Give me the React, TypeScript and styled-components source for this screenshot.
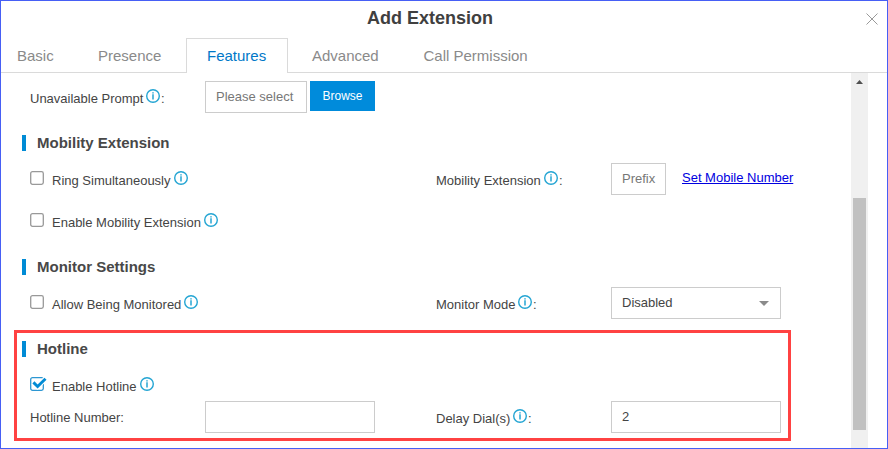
import React from "react";
import styled, { createGlobalStyle } from "styled-components";

const GlobalStyle = createGlobalStyle`
  * { box-sizing: border-box; }
  body {
    margin: 0;
    background: #fff;
    font-family: "Liberation Sans", Arial, sans-serif;
    font-size: 13px;
    color: #444;
  }
`;

const Dialog = styled.div`
  width: 888px;
  height: 449px;
  border: 1px solid #465ff5;
  background: #fff;
  display: flex;
  flex-direction: column;
  overflow: hidden;
`;

const Header = styled.header`
  height: 37px;
  flex: none;
  display: grid;
  grid-template-columns: 858px 28px;
`;

const Title = styled.h1`
  margin: 0;
  text-align: center;
  font-size: 18px;
  line-height: 34px;
  font-weight: bold;
  color: #404040;
`;

const CloseButton = styled.button`
  border: 0;
  padding: 12px 0 0 7px;
  background: none;
  display: flex;
`;

const TabBar = styled.nav`
  height: 35px;
  flex: none;
  display: flex;
`;

const Tab = styled.div<{ $width: number; $indent?: number; $active?: boolean }>`
  width: ${(p) => p.$width}px;
  padding-left: ${(p) => p.$indent ?? 21}px;
  border: 1px solid transparent;
  border-color: ${(p) => (p.$active ? "#dadada #dadada transparent" : "transparent transparent #dadada")};
  border-width: ${(p) => (p.$active ? "1px 1px 0" : "1px 0")};
  font-size: 15px;
  line-height: 34px;
  white-space: nowrap;
  color: ${(p) => (p.$active ? "#0078c8" : "#8a8a8a")};
`;

const TabRest = styled.div`
  flex: 1;
  border-bottom: 1px solid #dadada;
`;

const Body = styled.div`
  flex: 1;
  display: flex;
  min-height: 0;
`;

const Form = styled.form`
  width: 850px;
  padding-top: 8px;
`;

const Row = styled.div<{ $height?: number }>`
  height: ${(p) => p.$height ?? 32}px;
  margin-left: 29px;
  display: grid;
  grid-template-columns: 175px 231px 175px 1fr;
`;

const Label = styled.label<{ $drop?: number }>`
  display: flex;
  align-items: flex-start;
  padding-top: ${(p) => p.$drop ?? 10}px;
  line-height: 15px;
  white-space: nowrap;
`;

const CheckField = styled.label<{ $top?: number }>`
  grid-column: span 2;
  display: flex;
  align-items: flex-start;
  padding-top: ${(p) => p.$top ?? 8}px;
  line-height: 15px;
  white-space: nowrap;
`;

const CheckText = styled.span`
  margin: 2px 0 0 5px;
`;

const CheckSvg = styled.svg`
  flex: none;
  width: 17px;
  height: 14px;
`;

const InfoSvg = styled.svg<{ $gap: number; $lift?: number }>`
  flex: none;
  width: 14px;
  height: 14px;
  margin-left: ${(p) => p.$gap}px;
  margin-top: ${(p) => -(p.$lift ?? 0)}px;
`;

const Colon = styled.span`
  margin-left: 1px;
`;

const Controls = styled.div`
  display: flex;
  align-items: flex-start;
`;

const Field = styled.div<{ $width: number; $placeholder?: boolean }>`
  width: ${(p) => p.$width}px;
  height: 32px;
  padding: 0 11px 0 10px;
  border: 1px solid #ccc;
  display: flex;
  align-items: center;
  justify-content: space-between;
  line-height: 30px;
  white-space: nowrap;
  color: ${(p) => (p.$placeholder ? "#777" : "#444")};
`;

const BrowseButton = styled.button`
  width: 65px;
  height: 30px;
  margin-left: 3px;
  padding: 0;
  border: 0;
  background: #008bdb;
  color: #fff;
  font: 12px/30px "Liberation Sans", Arial, sans-serif;
`;

const Link = styled.a`
  margin: 7px 0 0 16px;
  line-height: 15px;
  color: #0000e0;
  text-decoration: underline;
`;

const SectionTitle = styled.h2<{ $top: number; $bottom: number; $left?: number }>`
  margin: ${(p) => p.$top}px 0 ${(p) => p.$bottom}px ${(p) => p.$left ?? 21}px;
  height: 16px;
  padding-left: 11px;
  border-left: 4px solid #008bd5;
  font-size: 15px;
  line-height: 16px;
  font-weight: bold;
  color: #484848;
`;

const Highlight = styled.section`
  width: 777px;
  height: 111px;
  margin: 11px 0 0 13px;
  border: 3px solid #ff4242;

  ${Row} {
    margin-left: 13px;
  }
`;

const Scrollbar = styled.div`
  width: 17px;
  background: #f0f0f0;
  display: flex;
  flex-direction: column;
  align-items: center;
`;

const ScrollArrow = styled.svg`
  width: 7px;
  height: 4px;
  margin: 7px 0 114px;
  flex: none;
`;

const ScrollThumb = styled.div`
  width: 13px;
  height: 232px;
  flex: none;
  background: #c1c1c1;
`;

const Info = ({ gap, lift }: { gap: number; lift?: number }) => (
  <InfoSvg $gap={gap} $lift={lift} viewBox="0 0 14 14" fill="none" stroke="#24a5d3">
    <circle cx="7" cy="7" r="6.3" strokeWidth="1.4" />
    <path d="M7 5.3v5.2M7 3.2v1.4" strokeWidth="1.5" />
  </InfoSvg>
);

const Checkbox = ({ checked }: { checked?: boolean }) => (
  <CheckSvg viewBox="0 0 17 14" fill="none">
    <rect x="0.7" y="0.7" width="12.6" height="12.6" rx="1.8" stroke={checked ? "#2d97d2" : "#999"} strokeWidth="1.3" />
    {checked && (
      <>
        <path d="M3.2 5.6l4.2 4L17 .2" stroke="#fff" strokeWidth="5" />
        <path d="M3.4 5.4l4.2 4.1 7.9-7.7" stroke="#008bd5" strokeWidth="2.9" />
      </>
    )}
  </CheckSvg>
);

export default function App() {
  return (
    <>
      <GlobalStyle />
      <Dialog>
        <Header>
          <Title>Add Extension</Title>
          <CloseButton type="button" aria-label="Close">
            <svg width="12" height="12" viewBox="0 0 12 12" stroke="#999" strokeWidth="1">
              <path d="M.5 .5l11 11M11.5 .5L.5 11.5" />
            </svg>
          </CloseButton>
        </Header>
        <TabBar>
          <Tab $width={75} $indent={16}>Basic</Tab>
          <Tab $width={110} $indent={22}>Presence</Tab>
          <Tab $width={102} $indent={20} $active>Features</Tab>
          <Tab $width={113} $indent={24}>Advanced</Tab>
          <Tab $width={130} $indent={22.5}>Call Permission</Tab>
          <TabRest />
        </TabBar>
        <Body>
          <Form>
            <Row>
              <Label>Unavailable Prompt<Info gap={2.5} lift={2} /><Colon>:</Colon></Label>
              <Controls>
                <Field $width={102} $placeholder>Please select</Field>
                <BrowseButton type="button">Browse</BrowseButton>
              </Controls>
            </Row>

            <SectionTitle $top={22} $bottom={12}>Mobility Extension</SectionTitle>
            <Row $height={42}>
              <CheckField><Checkbox /><CheckText>Ring Simultaneously</CheckText><Info gap={3.2} /></CheckField>
              <Label>Mobility Extension<Info gap={3.2} lift={2} /><Colon>:</Colon></Label>
              <Controls>
                <Field $width={55} $placeholder>Prefix</Field>
                <Link>Set Mobile Number</Link>
              </Controls>
            </Row>
            <Row>
              <CheckField><Checkbox /><CheckText>Enable Mobility Extension</CheckText><Info gap={3} /></CheckField>
            </Row>

            <SectionTitle $top={22} $bottom={12}>Monitor Settings</SectionTitle>
            <Row>
              <CheckField><Checkbox /><CheckText>Allow Being Monitored</CheckText><Info gap={3} /></CheckField>
              <Label>Monitor Mode<Info gap={2.5} lift={2} /><Colon>:</Colon></Label>
              <Field $width={170}>
                Disabled
                <svg width="10" height="5" viewBox="0 0 10 5" fill="#8b8b8b"><path d="M0 0h10L5 5z" /></svg>
              </Field>
            </Row>

            <Highlight>
              <SectionTitle $top={8} $bottom={20} $left={5}>Hotline</SectionTitle>
              <Row $height={24}>
                <CheckField $top={0}><Checkbox checked /><CheckText>Enable Hotline</CheckText><Info gap={3.2} /></CheckField>
              </Row>
              <Row>
                <Label $drop={9}>Hotline Number:</Label>
                <Field $width={170} />
                <Label>Delay Dial(s)<Info gap={2.5} lift={2} /><Colon>:</Colon></Label>
                <Field $width={170}>2</Field>
              </Row>
            </Highlight>
          </Form>
          <Scrollbar>
            <ScrollArrow viewBox="0 0 7 4" fill="#505050"><path d="M0 4L3.5 0 7 4z" /></ScrollArrow>
            <ScrollThumb />
          </Scrollbar>
        </Body>
      </Dialog>
    </>
  );
}
